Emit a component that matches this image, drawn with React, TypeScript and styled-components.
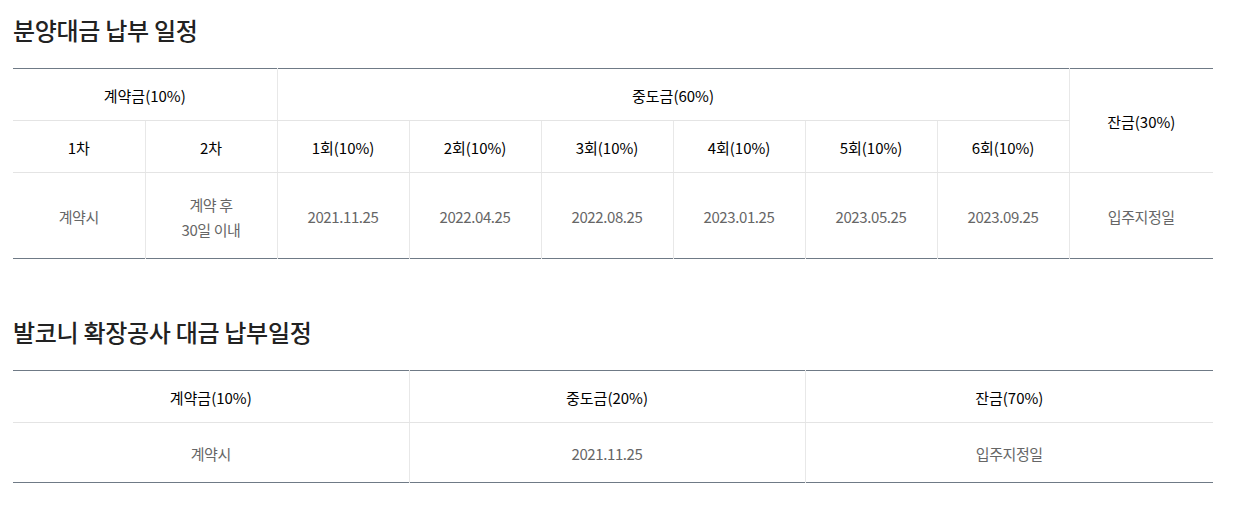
import { FC } from "react";
import styled, { createGlobalStyle } from "styled-components";

const GlobalStyle = createGlobalStyle`
    body {
        margin: 0;
        background: #fff;
        font-family: "Noto Sans CJK KR", "Noto Sans", sans-serif;
    }
`;

const installments = [
    { label: "1회(10%)", date: "2021.11.25" },
    { label: "2회(10%)", date: "2022.04.25" },
    { label: "3회(10%)", date: "2022.08.25" },
    { label: "4회(10%)", date: "2023.01.25" },
    { label: "5회(10%)", date: "2023.05.25" },
    { label: "6회(10%)", date: "2023.09.25" },
];

const App: FC = () => {
    return (
        <SPage>
            <GlobalStyle />
            <SSection>
                <STitle>분양대금 납부 일정</STitle>
                <STable>
                    <colgroup>
                        {Array.from({ length: 8 }).map((_, i) => (
                            <col key={i} style={{ width: "11%" }} />
                        ))}
                        <col style={{ width: "12%" }} />
                    </colgroup>
                    <thead>
                        <tr>
                            <STh colSpan={2}>계약금(10%)</STh>
                            <STh colSpan={6}>중도금(60%)</STh>
                            <STh rowSpan={2}>잔금(30%)</STh>
                        </tr>
                        <tr>
                            <STh>1차</STh>
                            <STh>2차</STh>
                            {installments.map((item) => (
                                <STh key={item.label}>{item.label}</STh>
                            ))}
                        </tr>
                    </thead>
                    <tbody>
                        <tr>
                            <STd tall>계약시</STd>
                            <STd tall>
                                계약 후
                                <br />
                                30일 이내
                            </STd>
                            {installments.map((item) => (
                                <STd tall key={item.date}>
                                    {item.date}
                                </STd>
                            ))}
                            <STd tall>입주지정일</STd>
                        </tr>
                    </tbody>
                </STable>
            </SSection>

            <SSection>
                <STitle>발코니 확장공사 대금 납부일정</STitle>
                <STable>
                    <colgroup>
                        <col style={{ width: "33%" }} />
                        <col style={{ width: "33%" }} />
                        <col style={{ width: "34%" }} />
                    </colgroup>
                    <thead>
                        <tr>
                            <STh>계약금(10%)</STh>
                            <STh>중도금(20%)</STh>
                            <STh>잔금(70%)</STh>
                        </tr>
                    </thead>
                    <tbody>
                        <tr>
                            <STd>계약시</STd>
                            <STd>2021.11.25</STd>
                            <STd>입주지정일</STd>
                        </tr>
                    </tbody>
                </STable>
            </SSection>
        </SPage>
    );
};

export default App;

const SPage = styled.div`
    width: 1200px;
    padding: 14px 13px 0;
`;

const SSection = styled.section`
    & + & {
        margin-top: 57px;
    }
`;

const STitle = styled.h2`
    margin: 0 0 22px;
    font-size: 24px;
    line-height: 32px;
    font-weight: 500;
    letter-spacing: -0.3px;
    color: #222;
`;

const STable = styled.table`
    width: 100%;
    table-layout: fixed;
    border-collapse: collapse;
    border-top: 1px solid #6f7a86;
    border-bottom: 1px solid #6f7a86;
`;

const STh = styled.th`
    height: 49px;
    padding: 2px 0 0;
    font-size: 15px;
    font-weight: 400;
    color: #000;
    text-align: center;
    border-bottom: 1px solid #e4e4e4;
    border-left: 1px solid #e8e8e8;

    &:first-child {
        border-left: none;
    }
    tr:first-child > &:last-child[rowspan] {
        border-left: 1px solid #e8e8e8;
    }
`;

const STd = styled.td<{ tall?: boolean }>`
    height: ${(p) => (p.tall ? "83px" : "57px")};
    padding: 2px 0 0;
    font-size: 15px;
    line-height: 25px;
    font-weight: 400;
    color: #666;
    letter-spacing: -0.4px;
    text-align: center;
    border-left: 1px solid #e8e8e8;

    &:first-child {
        border-left: none;
    }
`;
